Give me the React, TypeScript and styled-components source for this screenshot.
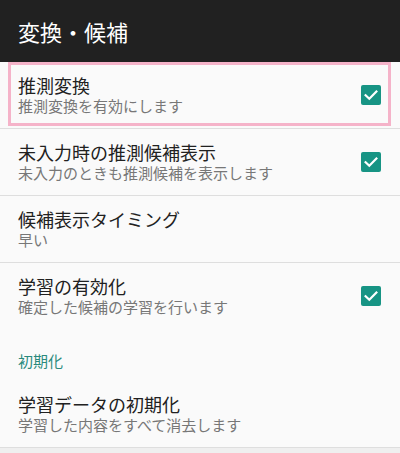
import React from "react";
import styled, { createGlobalStyle } from "styled-components";

const GlobalStyle = createGlobalStyle`
  html, body {
    margin: 0;
    padding: 0;
    background: #efefef;
  }
  body {
    font-family: "Noto Sans CJK JP", "Noto Sans", sans-serif;
  }
`;

const Screen = styled.div`
  width: 400px;
  display: flex;
  flex-direction: column;
`;

const Toolbar = styled.div`
  height: 62px;
  background: #212121;
  display: flex;
  align-items: center;
  padding: 0 18px;
  box-sizing: border-box;
`;

const ToolbarTitle = styled.h1`
  margin: 0;
  font-size: 22px;
  font-weight: 400;
  line-height: 26px;
  color: #ffffff;
`;

const List = styled.div`
  background: #fafafa;
  display: flex;
  flex-direction: column;
`;

const Row = styled.div<{ $focused?: boolean; $divider?: boolean }>`
  position: relative;
  display: flex;
  align-items: center;
  justify-content: space-between;
  padding: 12px 19px 12px 18px;
  border-bottom: ${(p) => (p.$divider ? "1px solid #dedede" : "1px solid transparent")};

  ${(p) =>
    p.$focused &&
    `
    &::after {
      content: "";
      position: absolute;
      left: 8px;
      right: 9px;
      top: 0;
      bottom: 2px;
      border: 3px solid #f5b3c9;
      pointer-events: none;
    }
  `}
`;

const Texts = styled.div`
  display: flex;
  flex-direction: column;
`;

const Title = styled.div`
  font-size: 18px;
  line-height: 22px;
  color: #212121;
`;

const Summary = styled.div`
  font-size: 15px;
  line-height: 20px;
  color: #777777;
`;

const Category = styled.div`
  padding: 21px 18px 10px;
  font-size: 15px;
  line-height: 20px;
  color: #2a8a7d;
`;

const Box = styled.div`
  width: 20px;
  height: 20px;
  border-radius: 2px;
  background: #179484;
  display: flex;
  align-items: center;
  justify-content: center;
  flex-shrink: 0;
`;

const Check = () => (
  <Box>
    <svg width="20" height="20" viewBox="0 0 20 20">
      <path
        d="M4.6 10.2 L8.3 13.8 L15.4 6.6"
        fill="none"
        stroke="#ffffff"
        strokeWidth="2.2"
        strokeLinecap="square"
      />
    </svg>
  </Box>
);

interface Pref {
  title: string;
  summary: string;
  checked?: boolean;
  focused?: boolean;
  divider?: boolean;
}

const conversion: Pref[] = [
  { title: "推測変換", summary: "推測変換を有効にします", checked: true, focused: true, divider: true },
  { title: "未入力時の推測候補表示", summary: "未入力のときも推測候補を表示します", checked: true, divider: true },
  { title: "候補表示タイミング", summary: "早い", divider: true },
  { title: "学習の有効化", summary: "確定した候補の学習を行います", checked: true },
];

const reset: Pref[] = [
  { title: "学習データの初期化", summary: "学習した内容をすべて消去します", divider: true },
];

const PrefRow = ({ pref }: { pref: Pref }) => (
  <Row $focused={pref.focused} $divider={pref.divider}>
    <Texts>
      <Title>{pref.title}</Title>
      <Summary>{pref.summary}</Summary>
    </Texts>
    {pref.checked && <Check />}
  </Row>
);

export default function App() {
  return (
    <Screen>
      <GlobalStyle />
      <Toolbar>
        <ToolbarTitle>変換・候補</ToolbarTitle>
      </Toolbar>
      <List>
        {conversion.map((p) => (
          <PrefRow key={p.title} pref={p} />
        ))}
        <Category>初期化</Category>
        {reset.map((p) => (
          <PrefRow key={p.title} pref={p} />
        ))}
      </List>
    </Screen>
  );
}
